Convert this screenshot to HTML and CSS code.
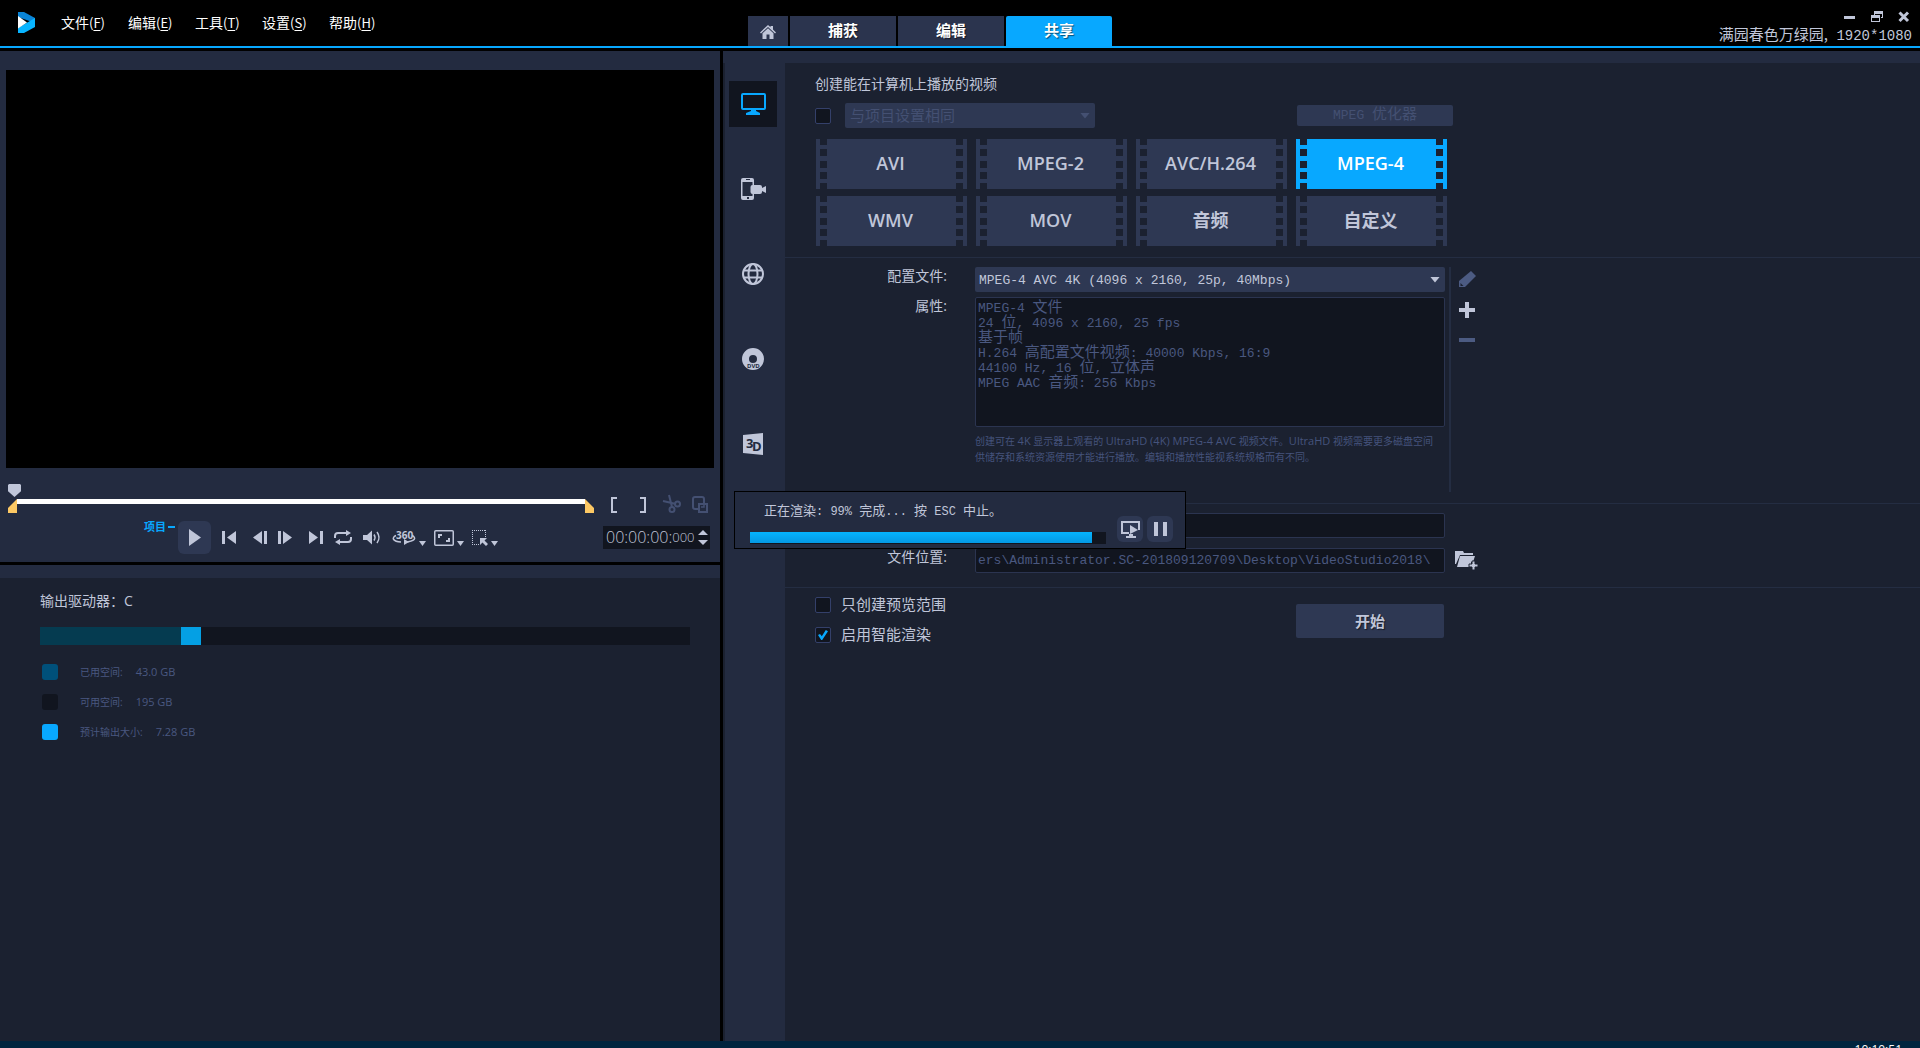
FILE: index.html
```html
<!DOCTYPE html>
<html lang="zh-CN">
<head>
<meta charset="utf-8">
<meta name="viewport" content="width=device-width, initial-scale=1">
<title>满园春色万绿园</title>
<link rel="stylesheet" href="styles.css">
</head>
<body>
<div class="app">
  <header class="topbar">
    <div class="topbar-left">
      <svg class="logo" width="17" height="21" viewBox="0 0 17 21"><path fill="#0a84d6" d="M0 0h6l11 6v5L0 5z"/><path fill="#08b4ff" d="M17 6v9L6 21H0v-5z"/><path fill="#fff" d="M0 4l9 6.500-9 6z"/></svg>
      <nav class="menu">
        <button type="button">文件<span>(<u>F</u>)</span></button>
        <button type="button">编辑<span>(<u>E</u>)</span></button>
        <button type="button">工具<span>(<u>T</u>)</span></button>
        <button type="button">设置<span>(<u>S</u>)</span></button>
        <button type="button">帮助<span>(<u>H</u>)</span></button>
      </nav>
    </div>
    <nav class="tabs">
      <button type="button" class="tab tab-home" aria-label="主页"><svg width="16" height="14" viewBox="0 0 16 14" fill="#c0c6d9"><path d="M8 0l2.500 2.300V1H13v3.600l3 2.800-1 1L8 2 1 8.400l-1-1z"/><path d="M8 3.200l5.500 5V14H9.500V9.500h-3V14H2.500V8.200z"/></svg></button>
      <button type="button" class="tab">捕获</button>
      <button type="button" class="tab">编辑</button>
      <button type="button" class="tab is-active">共享</button>
    </nav>
    <div class="window">
      <div class="window-buttons">
        <button type="button" aria-label="最小化"><svg width="12" height="12" viewBox="0 0 12 12"><path fill="#c0c6d9" d="M0 5h11v3H0z"/></svg></button>
        <button type="button" aria-label="还原"><svg width="12" height="12" viewBox="0 0 12 12" fill="#c0c6d9" fill-rule="evenodd"><path d="M3 0h9v7h-2V6h1V3H4v1H3z"/><path d="M0 4h9v7H0zm1 3v3h7V7z"/></svg></button>
        <button type="button" aria-label="关闭"><svg width="12" height="12" viewBox="0 0 12 12"><path stroke="#c0c6d9" stroke-width="3" d="M1.500 1.500l8.500 8.500M10 1.500L1.500 10"/></svg></button>
      </div>
      <p class="project mono"><span class="zh">满园春色万绿园,</span> 1920*1080</p>
    </div>
  </header>

  <main class="workspace">
    <section class="left">
      <div class="player">
        <div class="preview"></div>
        <div class="timeline">
          <div class="scrub">
            <input type="range" min="0" max="100" value="0" aria-label="播放位置">
            <svg class="mark mark-in" width="9" height="14" viewBox="0 0 9 14"><path fill="#fcc864" d="M9 0v14H0V9z"/></svg>
            <svg class="mark mark-out" width="9" height="14" viewBox="0 0 9 14"><path fill="#fcc864" d="M0 0v14h9V9z"/></svg>
          </div>
          <div class="trim">
            <button type="button" aria-label="开始标记"><svg width="6" height="16" viewBox="0 0 6 16"><path fill="#c0c6d9" d="M0 0h6v2H2v12h4v2H0z"/></svg></button>
            <button type="button" aria-label="结束标记"><svg width="6" height="16" viewBox="0 0 6 16"><path fill="#c0c6d9" d="M6 0H0v2h4v12H0v2h6z"/></svg></button>
            <button type="button" aria-label="分割"><svg width="18" height="18" viewBox="0 0 18 18" fill="none" stroke="#445072" stroke-width="2"><path d="M0 6l13 3M6 0l3 12"/><circle cx="14.500" cy="9" r="2.500"/><circle cx="9" cy="14.500" r="2.500"/></svg></button>
            <button type="button" aria-label="复制"><svg width="16" height="17" viewBox="0 0 16 17" fill="none" stroke="#445072" stroke-width="2"><path d="M6 13H3q-2 0-2-2V3q0-2 2-2h7q2 0 2 2v4"/><path d="M7 8h8v8H7z"/><path d="M9 11h3V7" stroke-width="1.500"/></svg></button>
          </div>
        </div>
        <div class="controls">
          <div class="mode">项目<i></i></div>
          <button type="button" class="play" aria-label="播放"><svg width="12" height="17" viewBox="0 0 12 17"><path fill="#c0c6d9" d="M0 0l12 8.500L0 17z"/></svg></button>
          <div class="transport">
            <button type="button" aria-label="起始"><svg width="14" height="13" viewBox="0 0 14 13" fill="#c0c6d9"><path d="M0 0h3v13H0zM14 0v13L5 6.500z"/></svg></button>
            <button type="button" aria-label="上一帧"><svg width="14" height="13" viewBox="0 0 14 13" fill="#c0c6d9"><path d="M11 0h3v13h-3zM9 0v13L0 6.500z"/></svg></button>
            <button type="button" aria-label="下一帧"><svg width="14" height="13" viewBox="0 0 14 13" fill="#c0c6d9"><path d="M0 0h3v13H0zM5 0v13l9-6.500z"/></svg></button>
            <button type="button" aria-label="结束"><svg width="14" height="13" viewBox="0 0 14 13" fill="#c0c6d9"><path d="M11 0h3v13h-3zM0 0v13l9-6.500z"/></svg></button>
            <button type="button" aria-label="重复"><svg width="18" height="15" viewBox="0 0 18 15"><path fill="none" stroke="#c0c6d9" stroke-width="2" d="M1 8V6q0-3 3-3h9M17 7v2q0 3-3 3H5"/><path fill="#c0c6d9" d="M12 0l5 3-5 3zM6 9v6l-5-3z"/></svg></button>
            <button type="button" aria-label="音量"><svg width="18" height="15" viewBox="0 0 18 15"><path fill="#c0c6d9" d="M0 5h4l5-4.500v14L4 10H0z"/><path fill="none" stroke="#c0c6d9" stroke-width="1.500" d="M11 4.500q2 3 0 6M14 2q4 5.500 0 11"/></svg></button>
            <div class="modes">
              <button type="button" class="has-caret" aria-label="360"><svg width="24" height="16" viewBox="0 0 24 16"><text x="4" y="9" class="icon-360">360</text><path fill="none" stroke="#c0c6d9" stroke-width="1.500" d="M4 5.500C-1 8 1 11.500 9 12M20 5.500c5 2.500 3 6-7 6.500"/><path fill="#c0c6d9" d="M12 9l5 3-5 3z"/></svg><b></b></button>
              <button type="button" class="has-caret" aria-label="全屏"><svg width="20" height="16" viewBox="0 0 20 16"><rect x=".75" y=".75" width="18.500" height="14.500" rx="1" fill="none" stroke="#c0c6d9" stroke-width="1.500"/><path fill="#c0c6d9" d="M4 4h4v2H6v2H4zM16 12h-4v-2h2V8h2z"/></svg><b></b></button>
              <button type="button" class="has-caret" aria-label="变形"><svg width="16" height="16" viewBox="0 0 16 16"><path fill="none" stroke="#c0c6d9" stroke-dasharray="1 1" d="M0 .5h14M.5 0v15M13.500 0v8M0 14.500h8"/><path fill="#c0c6d9" d="M8 8h7l-2.500 2.500L16 14l-2 2-3.500-3.500L8 15z"/></svg><b></b></button>
            </div>
          </div>
          <div class="timecode"><span>00:00:00:</span><small>000</small>
            <div class="spin"><button type="button" aria-label="增加"></button><button type="button" aria-label="减少"></button></div>
          </div>
        </div>
      </div>
      <div class="drive">
        <h2>输出驱动器：C</h2>
        <div class="usage"><div class="usage-used" style="width:21.7%"></div><div class="usage-new" style="width:3.1%"></div></div>
        <ul class="legend">
          <li><i class="sw sw-used"></i><span>已用空间:</span><em>43.0 GB</em></li>
          <li><i class="sw sw-free"></i><span>可用空间:</span><em>195 GB</em></li>
          <li><i class="sw sw-new"></i><span>预计输出大小:</span><em>7.28 GB</em></li>
        </ul>
      </div>
    </section>

    <section class="right">
      <nav class="kinds">
        <button type="button" class="is-active" aria-label="计算机"><svg width="25" height="22" viewBox="0 0 25 22"><rect x="1" y="1" width="23" height="15" rx="1" fill="none" stroke="#08a8ff" stroke-width="2"/><path fill="#08a8ff" d="M10 16h5v2l4 2v2H5v-2l5-2z"/></svg></button>
        <button type="button" aria-label="设备"><svg width="25" height="22" viewBox="0 0 25 22"><path fill="#c0c6d9" fill-rule="evenodd" d="M2 0h9q2 0 2 2v5h6q2 0 2 2v1l4-2v7l-4-2v1q0 2-2 2h-6v4q0 2-2 2H2q-2 0-2-2V2q0-2 2-2zM1.500 4v14h10v-2q-2 0-2-2V9q0-2 2-2V4zM5 1v1h4V1zm1 18v2h2v-2z"/></svg></button>
        <button type="button" aria-label="网络"><svg width="22" height="22" viewBox="0 0 22 22" fill="none" stroke="#c0c6d9" stroke-width="2"><circle cx="11" cy="11" r="10"/><ellipse cx="11" cy="11" rx="4.500" ry="10"/><path d="M2 7.500h18M2 14.500h18"/></svg></button>
        <button type="button" aria-label="光盘"><svg width="22" height="22" viewBox="0 0 22 22"><path fill="#c0c6d9" fill-rule="evenodd" d="M11 0a11 11 0 0 1 0 22 11 11 0 0 1 0-22zm0 7a4 4 0 0 0 0 8 4 4 0 0 0 0-8z"/><text x="5" y="20" class="icon-dvd">DVD</text></svg></button>
        <button type="button" aria-label="3D"><svg width="20" height="22" viewBox="0 0 20 22"><path fill="#c0c6d9" d="M0 2l20-2v22L0 20z"/><text x="3" y="15" class="icon-3d">3</text><text x="9" y="18" class="icon-3d">D</text></svg></button>
      </nav>

      <form class="share">
        <section class="block formats">
          <h1>创建能在计算机上播放的视频</h1>
          <div class="same">
            <input type="checkbox" aria-label="与项目设置相同">
            <div class="pick pick-off"><select class="zh" disabled aria-label="项目设置"><option>与项目设置相同</option></select></div>
            <button type="button" class="optimizer mono" disabled>MPEG <span class="zh">优化器</span></button>
          </div>
          <div class="tiles">
            <button type="button">AVI</button>
            <button type="button">MPEG-2</button>
            <button type="button">AVC/H.264</button>
            <button type="button" class="is-active">MPEG-4</button>
            <button type="button">WMV</button>
            <button type="button">MOV</button>
            <button type="button">音频</button>
            <button type="button">自定义</button>
          </div>
        </section>

        <section class="block profile">
          <div class="fields">
            <label for="profile">配置文件:</label>
            <div class="pick"><select id="profile" class="mono"><option>MPEG-4 AVC 4K (4096 x 2160, 25p, 40Mbps)</option></select></div>
            <label for="props">属性:</label>
            <output id="props" class="props mono">MPEG-4 <span class="zh">文件</span><br>24 <span class="zh">位</span>, 4096 x 2160, 25 fps<br><span class="zh">基于帧</span><br>H.264 <span class="zh">高配置文件视频</span>: 40000 Kbps, 16:9<br>44100 Hz, 16 <span class="zh">位</span>, <span class="zh">立体声</span><br>MPEG AAC <span class="zh">音频</span>: 256 Kbps</output>
            <p class="note">创建可在 <span>4K</span> 显示器上观看的 <span>UltraHD (4K) MPEG-4 AVC</span> 视频文件。<span>UltraHD</span> 视频需要更多磁盘空间<br>供储存和系统资源使用才能进行播放。编辑和播放性能视系统规格而有不同。</p>
          </div>
          <div class="tools">
            <button type="button" aria-label="编辑"><svg width="17" height="17" viewBox="0 0 17 17"><path fill="#4c5b82" d="M12 0l5 5L6 16H0v-6z"/><path fill="#1b2130" d="M1.500 12l3 3h-3z"/></svg></button>
            <button type="button" aria-label="添加"><svg width="16" height="16" viewBox="0 0 16 16"><path fill="#c0c6d9" d="M6 0h4v6h6v4h-6v6H6v-6H0V6h6z"/></svg></button>
            <button type="button" aria-label="删除"><svg width="16" height="16" viewBox="0 0 16 16"><path fill="#4c5b82" d="M0 6h16v4H0z"/></svg></button>
          </div>
        </section>

        <section class="block target">
          <input type="text" class="name mono" aria-label="文件名称">
          <label for="place">文件位置:</label>
          <input type="text" id="place" class="mono" value="ers\Administrator.SC-201809120709\Desktop\VideoStudio2018\">
          <button type="button" aria-label="浏览"><svg width="23" height="20" viewBox="0 0 23 20" fill="#c0c6d9"><path d="M0 1h8l1 2h9v2H5L1 14H0z"/><path d="M5 6h15l-2 6h-2v5H2z"/><path d="M17 11h3v3h3v3h-3v3h-3v-3h-3v-3h3z" stroke="#1b2130"/></svg></button>
        </section>

        <section class="block finish">
          <div class="checks">
            <label class="zh"><input type="checkbox"><span>只创建预览范围</span></label>
            <label class="zh"><input type="checkbox" checked><span>启用智能渲染</span></label>
          </div>
          <button type="button" class="start">开始</button>
        </section>
      </form>

      <div class="dialog" role="dialog" aria-label="正在渲染">
        <div class="dialog-main">
          <p><span>正在渲染</span>: 99% <span>完成</span>... <span>按</span> ESC <span>中止。</span></p>
          <div class="progress"><div class="progress-fill" style="width:96%"></div></div>
        </div>
        <button type="button" aria-label="预览"><svg width="19" height="17" viewBox="0 0 19 17"><path fill="none" stroke="#c0c6d9" stroke-width="2" d="M8 12H1V1h17v8"/><path fill="#c0c6d9" d="M9 4l8 5-8 4zM8 13h4v2h3v2H5v-2h3z"/></svg></button>
        <button type="button" aria-label="暂停"><svg width="13" height="14" viewBox="0 0 13 14"><path fill="#c0c6d9" d="M0 0h4v14H0zM9 0h4v14H9z"/></svg></button>
      </div>
    </section>
  </main>
  <footer class="status"><span>10:10:51</span></footer>
</div>
</body>
</html>
```
FILE: styles.css
```css
* { box-sizing: border-box; }

:root {
  --ink: #c0c6d9;
  --dim: #445072;
  --blue: #08a8ff;
  --panel: #232b40;
  --base: #1b2130;
  --field: #11151f;
  --key: #2e3853;
  --line: #242d42;
}

body {
  margin: 0;
  background: #000;
  color: var(--ink);
  font: 14px/20px "Open Sans", "Noto Sans CJK SC", sans-serif;
}

button, input, select { font: inherit; color: inherit; }
button { padding: 0; border: 0; background: none; line-height: 0; }
svg { display: block; flex: none; overflow: visible; }
h1, h2, p, ul { margin: 0; padding: 0; font-size: 14px; font-weight: 400; }

.mono { font-family: "Liberation Mono", "Noto Sans CJK SC", monospace; font-size: 13px; font-weight: 400; }
.zh { font-size: 15px; font-family: "Noto Sans CJK SC", sans-serif; font-weight: 400; }

.app { display: flex; flex-direction: column; height: 100vh; overflow: hidden; }

/* Top bar */
.topbar {
  display: grid;
  grid-template: 46px / 37.5% auto 1fr;
  flex: none;
  border-bottom: 2px solid var(--blue);
}
.topbar-left { display: flex; padding: 12px 0 0 18px; gap: 26px; }
.menu { display: flex; }
.menu button {
  width: 67px;
  height: 21px;
  text-align: left;
  color: #fff;
  line-height: 21px;
  font-family: "Noto Sans CJK SC", sans-serif;
}
.menu span { font-size: 13px; }
.menu u { text-underline-offset: 2px; }

.tabs { display: flex; align-items: flex-end; gap: 2px; padding-left: 28px; }
.tab {
  width: 106px;
  height: 30px;
  background: #2b344e;
  color: #fff;
  font-size: 15px;
  font-weight: 700;
  line-height: 28px;
  padding-bottom: 2px;
  text-shadow: 1px 1px 1px #0008;
}
.tab-home { width: 40px; display: grid; place-items: center; padding: 2px 0 0; }
.tab.is-active { background: var(--blue); border-radius: 2px 2px 0 0; }

.window { display: flex; flex-direction: column; align-items: flex-end; padding: 11px 8px 0 0; }
.window-buttons { display: flex; gap: 15px; padding-right: 2px; }
.project { font-size: 14px; line-height: 20px; padding-top: 3px; }
.project .zh { line-height: 0; }

/* Workspace */
.workspace {
  display: grid;
  grid-template-columns: 37.5% 1fr;
  flex: 1;
  min-height: 0;
  gap: 3px;
  padding-top: 3px;
}
.left { display: flex; flex-direction: column; gap: 3px; }
.player { background: var(--panel); padding: 19px 6px 8px; }
.preview { background: #000; aspect-ratio: 708 / 398; }

.timeline { display: flex; padding: 16px 6px 0 2px; }
.scrub { display: grid; flex: 1; }
.scrub > * { grid-area: 1 / 1; }
.scrub input {
  appearance: none;
  width: 100%;
  height: 29px;
  margin: 0;
  padding: 6px 0 0;
  background: none;
}
.scrub input::-webkit-slider-runnable-track {
  height: 5px;
  background: linear-gradient(#fff, #fff) center / calc(100% - 18px) 5px no-repeat;
}
.scrub input::-webkit-slider-thumb {
  appearance: none;
  width: 13px;
  height: 13px;
  margin-top: -15px;
  background: var(--ink);
  clip-path: polygon(0 8%, 8% 0, 92% 0, 100% 8%, 100% 55%, 50% 100%, 0 55%);
}
.mark { align-self: end; }
.mark-out { justify-self: end; }
.trim { display: flex; align-items: flex-end; padding-left: 17px; }
.trim button { margin-right: 11px; }
.trim button:nth-child(1) { margin-right: 23px; }
.trim button:nth-child(2) { margin-right: 17px; }
.trim button:last-child { margin-right: 0; }

.controls { display: flex; align-items: center; padding: 8px 4px 0 138px; }
.mode {
  display: flex;
  align-items: center;
  gap: 2px;
  align-self: flex-start;
  width: 34px;
  color: var(--blue);
  font-size: 11px;
  font-weight: 700;
  line-height: 12px;
  white-space: nowrap;
}
.mode i { width: 7px; height: 2px; background: var(--blue); }
.play { display: grid; place-items: center; width: 33px; height: 33px; border-radius: 6px; background: var(--key); }
.transport { display: flex; align-items: center; flex: 1; gap: 11px; padding-left: 11px; }
.transport > button:nth-child(1), .transport > button:nth-child(3) { margin-right: 6px; }
.modes { display: flex; gap: 8px; }
.has-caret { display: flex; align-items: center; gap: 3px; }
.has-caret b, .spin button {
  width: 7px;
  height: 5px;
  background: var(--ink);
  clip-path: polygon(0 0, 100% 0, 50% 100%);
}
.has-caret b { margin-top: 12px; }
.icon-360 { font: 700 10px "Open Sans", sans-serif; fill: #c0c6d9; }
.icon-dvd { font: 700 6px "Open Sans", sans-serif; fill: #232b40; }
.icon-3d { font: 700 13px "Open Sans", sans-serif; fill: #232b40; }

.timecode {
  display: flex;
  align-items: center;
  width: 107px;
  height: 23px;
  padding: 0 2px 0 3px;
  background: var(--field);
  font: 300 16px/23px "Liberation Sans Narrow", "Open Sans", sans-serif;
}
.timecode small { font-size: 13px; }
.spin { display: flex; flex-direction: column; gap: 5px; margin-left: auto; }
.spin button { width: 10px; }
.spin button:first-child { transform: rotate(180deg); }

.drive { flex: 1; background: var(--base); border-top: 13px solid var(--panel); padding: 13px 30px 0 40px; }
.drive h2 { line-height: 20px; }
.usage { display: flex; height: 18px; margin: 16px 0 19px; background: var(--field); }
.usage-used { background: #053b50; }
.usage-new { background: #04a0e4; }
.legend { display: flex; flex-direction: column; gap: 14px; list-style: none; padding-left: 2px; color: #4a5880; }
.legend li { display: flex; align-items: center; height: 16px; font-size: 10px; }
.legend em { font-style: normal; font-size: 11px; padding-left: 13px; }
.sw { width: 16px; height: 16px; margin-right: 22px; border-radius: 3px; }
.sw-used { background: #00507a; }
.sw-free { background: var(--field); }
.sw-new { background: var(--blue); }

/* Share panel */
.right {
  position: relative;
  display: flex;
  background: var(--base);
  border-top: 12px solid var(--panel);
}
.kinds {
  display: flex;
  flex-direction: column;
  align-items: center;
  gap: 39px;
  flex: none;
  width: 62px;
  padding-top: 18px;
  border-left: 2px solid var(--base);
  background: var(--panel);
}
.kinds button { display: grid; place-items: center; width: 48px; height: 46px; margin-right: 4px; }
.kinds .is-active { background: var(--field); }

.share { flex: 1; }
.block { border-bottom: 1px solid var(--line); padding-left: 30px; }
.formats { padding-top: 11px; padding-bottom: 11px; }
.same { display: flex; align-items: center; padding: 9px 0 11px; }

input[type="checkbox"] {
  appearance: none;
  display: grid;
  place-items: center;
  flex: none;
  width: 16px;
  height: 16px;
  margin: 0;
  border: 1px solid #34406a;
  border-radius: 2px;
  background: var(--field);
}
input[type="checkbox"]:checked::before {
  content: "";
  width: 10px;
  height: 10px;
  background: var(--blue);
  clip-path: polygon(0 50%, 20% 40%, 38% 62%, 78% 0, 100% 12%, 42% 100%, 32% 100%);
}

.pick { display: grid; align-items: center; height: 25px; border-radius: 2px; background: var(--key); }
.pick > *, .pick::after { grid-area: 1 / 1; }
.pick::after {
  content: "";
  justify-self: end;
  width: 10px;
  height: 6px;
  margin-right: 5px;
  background: var(--ink);
  clip-path: polygon(0 0, 100% 0, 50% 100%);
  pointer-events: none;
}
.pick select {
  appearance: none;
  width: 100%;
  height: 25px;
  padding: 2px 20px 0 4px;
  border: 0;
  background: none;
  opacity: 1;
}
.pick-off { width: 250px; margin: 0 202px 0 14px; }
.pick-off select { padding: 0 20px 2px 5px; }
.pick-off select, .optimizer { color: var(--dim); }
.pick-off::after { background: var(--dim); }
.optimizer { width: 156px; height: 21px; border-radius: 2px; background: var(--key); line-height: 21px; }
.optimizer .zh { line-height: 0; }

.tiles { display: grid; grid-template-columns: repeat(4, 151px); gap: 7px 9px; padding-left: 1px; }
.tiles button {
  --holes: linear-gradient(var(--base) 6px, #0000 6px 10px, var(--base) 10px 17px, #0000 17px 22px,
    var(--base) 22px 29px, #0000 29px 33px, var(--base) 33px 40px, #0000 40px 44px, var(--base) 44px);
  height: 50px;
  padding: 0 2px 2px 0;
  background: var(--holes) 4px 0 / 7px 50px no-repeat, var(--holes) 140px 0 / 7px 50px no-repeat, var(--key);
  font-size: 18px;
  font-weight: 600;
  line-height: 24px;
}
.tiles .is-active {
  background-color: var(--blue);
  color: #fff;
}

.profile { display: flex; padding-top: 9px; padding-bottom: 11px; }
.fields { display: grid; grid-template-columns: 132px 470px; column-gap: 28px; align-content: start; }
.fields label, .target label { text-align: right; line-height: 18px; }
.fields label[for="props"] { padding-top: 5px; }
.props {
  height: 130px;
  margin-top: 5px;
  padding: 3px 2px;
  border: 1px solid #2b3450;
  border-radius: 2px;
  background: var(--field);
  color: #4a5880;
  line-height: 15px;
}
.props .zh { line-height: 0; }
.note { grid-column: 2; padding-top: 6px; color: #45537c; font-size: 10px; line-height: 16px; white-space: nowrap; }
.note span { font-size: 11px; line-height: 0; }
.tools {
  display: flex;
  flex-direction: column;
  gap: 14px;
  height: 225px;
  margin-left: 4px;
  padding: 4px 0 0 8px;
  border-left: 2px solid var(--line);
}

.target {
  display: grid;
  grid-template-columns: 132px 470px auto;
  column-gap: 28px;
  row-gap: 10px;
  justify-content: start;
  padding-top: 9px;
  padding-bottom: 14px;
}
.target input {
  width: 100%;
  height: 25px;
  padding: 0 2px;
  border: 1px solid #2b3450;
  border-radius: 2px;
  background: var(--field);
  color: #4a5880;
}
.target .name { grid-column: 2; }
.target label { grid-column: 1; }
.target button { margin: 2px 0 0 -18px; align-self: start; }

.finish { display: flex; border-bottom: 0; padding-top: 9px; }
.checks { display: flex; flex-direction: column; gap: 14px; width: 481px; }
.checks label { display: flex; align-items: center; gap: 10px; height: 16px; }
.checks span { padding-bottom: 2px; }
.start {
  width: 148px;
  height: 34px;
  margin-top: 7px;
  border-radius: 2px;
  background: var(--key);
  font-size: 15px;
  font-weight: 700;
  line-height: 34px;
  text-shadow: 1px 1px 1px #0008;
}

/* Rendering dialog floats over the form */
.dialog {
  position: absolute;
  left: 11px;
  top: 428px;
  display: flex;
  align-items: flex-end;
  gap: 4px;
  width: 452px;
  height: 58px;
  padding: 0 12px 6px 15px;
  border: 1px solid #000;
  background: var(--panel);
}
.dialog-main { flex: 1; padding-right: 7px; }
.dialog p {
  padding-left: 14px;
  font: 12px/18px "Liberation Mono", "Noto Sans CJK SC", monospace;
  margin-bottom: 11px;
}
.dialog p span { font-size: 13px; line-height: 0; }
.progress { height: 12px; margin-bottom: -2px; background: var(--field); }
.progress-fill { height: 11px; background: linear-gradient(#04b4ff, #0498e4); }
.dialog button { display: grid; place-items: center; width: 26px; height: 26px; border-radius: 6px; background: var(--key); }

.status { flex: none; display: flex; justify-content: flex-end; height: 7px; background: #00243e; overflow: hidden; }
.status span { padding: 2px 18px 0 0; color: #fff; font-size: 12px; line-height: 14px; }
```
